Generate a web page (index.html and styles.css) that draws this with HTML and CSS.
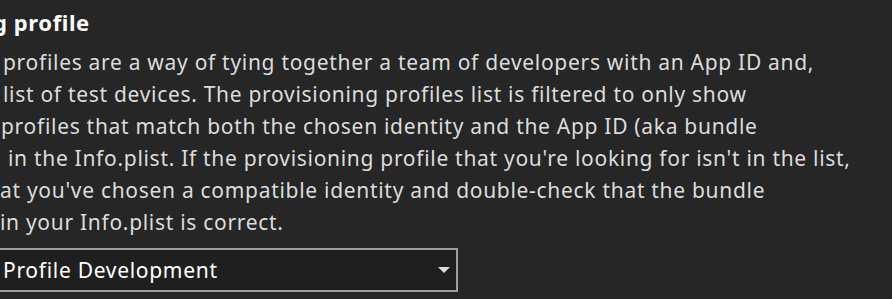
FILE: index.html
```html
<!DOCTYPE html>
<html>
  <head>
    <title>Provisioning profile</title>
    <link rel="stylesheet" href="styles.css">
  </head>
  <body>
    <div class="panel">
      <h2 class="heading">g profile</h2>

      <p class="desc">
        <span class="line pad-3">profiles are a way of tying together a team of developers with an App ID and,</span>
        <span class="line pad-3">list of test devices. The provisioning profiles list is filtered to only show</span>
        <span class="line pad-1">profiles that match both the chosen identity and the App ID (aka bundle</span>
        <span class="line pad-8">in the Info.plist. If the provisioning profile that you're looking for isn't in the list,</span>
        <span class="line pad-0">at you've chosen a compatible identity and double-check that the bundle</span>
        <span class="line pad-0">in your Info.plist is correct.</span>
      </p>

      <div class="select">
        <span class="select-value">Profile Development</span>
        <svg class="select-arrow" width="12" height="7" viewBox="0 0 12 7">
          <path d="M0 0 L12 0 L6 6 Z" fill="#dcdcdc" />
        </svg>
      </div>
    </div>
  </body>
</html>
```

FILE: styles.css
```css
html,
body {
  margin: 0;
  padding: 0;
  height: 100%;
  overflow: hidden;
}

body {
  background-color: #262626;
  color: #dcdcdc;
  font-family: "Noto Sans", "Open Sans", sans-serif;
  font-size: 21px;
  letter-spacing: 0.7px;
}

.panel {
  padding-top: 4px;
}

.heading {
  margin: 0 0 0 -7px;
  font-size: 22px;
  font-weight: 700;
  line-height: 36px;
  letter-spacing: 0.6px;
  color: #fff;
}

.desc {
  margin: 6px 0 0;
  line-height: 32px;
}

.line {
  display: block;
  white-space: nowrap;
}

.pad-0 {
  padding-left: 0;
}

.pad-1 {
  padding-left: 1px;
}

.pad-3 {
  padding-left: 3px;
}

.pad-8 {
  padding-left: 8px;
}

.select {
  margin: 10px 0 0 -20px;
  width: 474px;
  height: 40px;
  display: flex;
  align-items: center;
  justify-content: space-between;
  border: 2px solid #9f9f9f;
  background-color: #1f1f1f;
  color: #fff;
}

.select-value {
  padding-left: 21px;
}

.select-arrow {
  margin-right: 6px;
}
```
